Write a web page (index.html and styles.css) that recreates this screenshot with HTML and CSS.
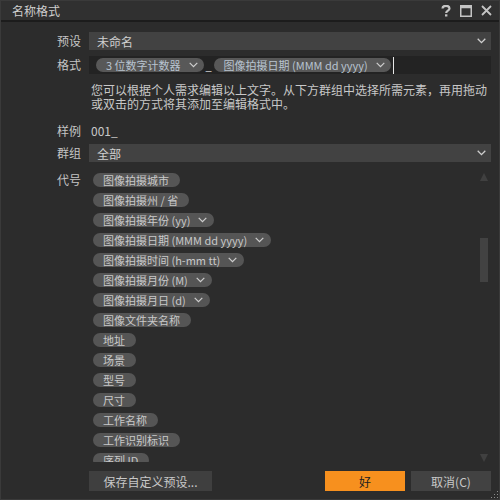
FILE: index.html
```html
<!DOCTYPE html>
<html lang="zh-CN">
<head>
<meta charset="utf-8">
<title>名称格式</title>
<link rel="stylesheet" href="styles.css">
</head>
<body>
<div class="window">
  <div class="titlebar">
    <span class="title">名称格式</span>
    <div class="win-icons">
      <svg class="wi" width="10" height="12" viewBox="0 0 10 12"><path d="M1.5 3.5 C1.5 1.2 3.2 0.8 5 0.8 C7 0.8 8.5 1.8 8.5 3.6 C8.5 5.6 5.2 5.8 5.2 8" fill="none" stroke="#c4c4c4" stroke-width="2.2"/><rect x="4" y="9.3" width="2.4" height="2.2" fill="#c4c4c4"/></svg>
      <svg class="wi" width="12" height="12" viewBox="0 0 12 12"><rect x="0.75" y="0.75" width="10.5" height="10.5" fill="none" stroke="#c4c4c4" stroke-width="1.5"/><rect x="0.75" y="0.75" width="10.5" height="2.5" fill="#c4c4c4"/></svg>
      <svg class="wi" width="11" height="11" viewBox="0 0 11 11"><path d="M1 1 L10 10 M10 1 L1 10" stroke="#c4c4c4" stroke-width="1.8"/></svg>
    </div>
  </div>
  <div class="content">
    <div class="row r-preset">
      <label class="lbl">预设</label>
      <div class="select">
        <span>未命名</span>
        <svg class="chev" width="9" height="6" viewBox="0 0 9 6"><path d="M0.7 0.8 L4.5 4.6 L8.3 0.8" fill="none" stroke="#cfcfcf" stroke-width="1.3"/></svg>
      </div>
    </div>
    <div class="row r-format">
      <label class="lbl">格式</label>
      <div class="format-box">
        <span class="token">3 位数字计数器<svg class="tchev" width="9" height="6" viewBox="0 0 9 6"><path d="M0.7 0.8 L4.5 4.6 L8.3 0.8" fill="none" stroke="#cfcfcf" stroke-width="1.2"/></svg></span>
        <span class="sep">_</span>
        <span class="token">图像拍摄日期 (MMM dd yyyy)<svg class="tchev" width="9" height="6" viewBox="0 0 9 6"><path d="M0.7 0.8 L4.5 4.6 L8.3 0.8" fill="none" stroke="#cfcfcf" stroke-width="1.2"/></svg></span>
        <span class="caret"></span>
      </div>
    </div>
    <div class="row r-help">
      <span class="lbl"></span>
      <p class="help">您可以根据个人需求编辑以上文字。从下方群组中选择所需元素，再用拖动或双击的方式将其添加至编辑格式中。</p>
    </div>
    <div class="row r-sample">
      <label class="lbl">样例</label>
      <span class="sample">001_</span>
    </div>
    <div class="row r-group">
      <label class="lbl">群组</label>
      <div class="select">
        <span>全部</span>
        <svg class="chev" width="9" height="6" viewBox="0 0 9 6"><path d="M0.7 0.8 L4.5 4.6 L8.3 0.8" fill="none" stroke="#cfcfcf" stroke-width="1.3"/></svg>
      </div>
    </div>
    <div class="row r-tokens">
      <label class="lbl">代号</label>
      <div class="token-area">
        <div class="token-list">
          <span class="pill">图像拍摄城市</span>
          <span class="pill">图像拍摄州 / 省</span>
          <span class="pill">图像拍摄年份 (yy)<svg class="tchev" width="9" height="6" viewBox="0 0 9 6"><path d="M0.7 0.8 L4.5 4.6 L8.3 0.8" fill="none" stroke="#cfcfcf" stroke-width="1.2"/></svg></span>
          <span class="pill">图像拍摄日期 (MMM dd yyyy)<svg class="tchev" width="9" height="6" viewBox="0 0 9 6"><path d="M0.7 0.8 L4.5 4.6 L8.3 0.8" fill="none" stroke="#cfcfcf" stroke-width="1.2"/></svg></span>
          <span class="pill">图像拍摄时间 (h-mm tt)<svg class="tchev" width="9" height="6" viewBox="0 0 9 6"><path d="M0.7 0.8 L4.5 4.6 L8.3 0.8" fill="none" stroke="#cfcfcf" stroke-width="1.2"/></svg></span>
          <span class="pill">图像拍摄月份 (M)<svg class="tchev" width="9" height="6" viewBox="0 0 9 6"><path d="M0.7 0.8 L4.5 4.6 L8.3 0.8" fill="none" stroke="#cfcfcf" stroke-width="1.2"/></svg></span>
          <span class="pill">图像拍摄月日 (d)<svg class="tchev" width="9" height="6" viewBox="0 0 9 6"><path d="M0.7 0.8 L4.5 4.6 L8.3 0.8" fill="none" stroke="#cfcfcf" stroke-width="1.2"/></svg></span>
          <span class="pill">图像文件夹名称</span>
          <span class="pill">地址</span>
          <span class="pill">场景</span>
          <span class="pill">型号</span>
          <span class="pill">尺寸</span>
          <span class="pill">工作名称</span>
          <span class="pill">工作识别标识</span>
          <span class="pill">序列 ID</span>
        </div>
        <div class="scrollbar">
          <span class="arrow up"></span>
          <span class="thumb"></span>
          <span class="arrow down"></span>
        </div>
      </div>
    </div>
    <div class="buttons">
      <button class="btn save">保存自定义预设...</button>
      <span class="spacer"></span>
      <button class="btn ok">好</button>
      <button class="btn cancel">取消(C)</button>
    </div>
  </div>
  <svg class="grip" width="8" height="8" viewBox="0 0 8 8"><rect x="6" y="0" width="1" height="1" fill="#8a8a8a"/><rect x="3" y="3" width="1" height="1" fill="#8a8a8a"/><rect x="6" y="3" width="1" height="1" fill="#8a8a8a"/><rect x="0" y="6" width="1" height="1" fill="#8a8a8a"/><rect x="3" y="6" width="1" height="1" fill="#8a8a8a"/><rect x="6" y="6" width="1" height="1" fill="#8a8a8a"/></svg>
</div>
</body>
</html>
```

FILE: styles.css
```css
* { box-sizing: border-box; }
html, body {
  margin: 0;
  padding: 0;
  background: #2c2c2c;
}
body {
  font-family: "Noto Sans CJK SC", "Noto Sans", sans-serif;
  font-size: 12px;
  color: #c8c8c8;
}
.window {
  position: relative;
  width: 500px;
  height: 500px;
  background: #2c2c2c;
  border: 1px solid #3a3a3a;
  display: flex;
  flex-direction: column;
}
.titlebar {
  height: 21px;
  flex: none;
  background: #303030;
  border-bottom: 2px solid #1c1c1c;
  display: flex;
  align-items: center;
  padding: 0 7px 0 11px;
}
.title {
  font-size: 12px;
  color: #cfcfcf;
  line-height: 19px;
  flex: 1;
}
.win-icons {
  display: flex;
  align-items: center;
  gap: 9px;
}
.wi { display: block; }
.content {
  flex: 1;
  display: flex;
  flex-direction: column;
  padding: 10px 8px 8px 0;
}
.row {
  display: flex;
  align-items: center;
}
.lbl {
  width: 80px;
  flex: none;
  text-align: right;
  margin-right: 8px;
  color: #c4c4c4;
  line-height: 14px;
}
.select {
  flex: 1;
  height: 18px;
  background: #424242;
  display: flex;
  align-items: center;
  justify-content: space-between;
  padding: 0 5px 0 8px;
  color: #d0d0d0;
}
.chev { display: block; }
.r-format { margin-top: 6px; }
.format-box {
  flex: 1;
  height: 18px;
  background: #232323;
  display: flex;
  align-items: center;
  padding-left: 7px;
}
.token {
  display: inline-flex;
  align-items: center;
  height: 14px;
  border-radius: 7px;
  background: #585858;
  padding: 0 6px 0 10px;
  font-size: 11px;
  color: #b8c4d0;
  white-space: nowrap;
}
.tchev { margin-left: 8px; display: block; }
.sep {
  width: 10px;
  text-align: center;
  color: #e0e0e0;
  font-size: 11px;
  line-height: 14px;
  align-self: flex-end;
  margin-bottom: 2px;
}
.caret {
  width: 1px;
  height: 17px;
  background: #e6e6e6;
  margin-left: 2px;
}
.r-help { margin-top: 9px; align-items: flex-start; }
.help {
  margin: 0;
  flex: 1;
  line-height: 14px;
  padding-left: 2px;
  padding-right: 4px;
  color: #c8c8c8;
}
.r-sample { margin-top: 13px; }
.sample { padding-left: 2px; line-height: 14px; color: #c8c8c8; }
.r-group { margin-top: 6px; }
.r-tokens {
  margin-top: 8px;
  align-items: flex-start;
}
.r-tokens .lbl { margin-top: 3px; }
.token-area {
  flex: 1;
  height: 292px;
  display: flex;
  overflow: hidden;
}
.token-list {
  flex: 1;
  display: flex;
  flex-direction: column;
  align-items: flex-start;
  gap: 6px;
  padding: 3px 0 0 4px;
  overflow: hidden;
}
.pill {
  display: inline-flex;
  align-items: center;
  height: 14px;
  flex: none;
  border-radius: 7px;
  background: #555555;
  padding: 0 11px 0 10px;
  font-size: 11px;
  color: #c9c9c9;
  white-space: nowrap;
}
.pill .tchev { margin-left: 8px; margin-right: -4px; }
.scrollbar {
  width: 8px;
  flex: none;
  margin-right: 3px;
  display: flex;
  flex-direction: column;
  align-items: center;
}
.arrow {
  width: 0;
  height: 0;
  border-left: 4px solid transparent;
  border-right: 4px solid transparent;
}
.arrow.up {
  margin-top: 3px;
  border-bottom: 8px solid #404040;
}
.arrow.down {
  margin-top: auto;
  border-top: 8px solid #404040;
}
.thumb {
  width: 8px;
  height: 44px;
  background: #424242;
  margin-top: 57px;
}
.buttons {
  margin-top: auto;
  display: flex;
  padding-left: 88px;
}
.btn {
  height: 20px;
  border: none;
  font-family: inherit;
  font-size: 12px;
  padding: 0;
  cursor: default;
}
.save {
  width: 123px;
  background: #3f3f3f;
  color: #c8c8c8;
}
.spacer { flex: 1; }
.ok {
  width: 80px;
  background: #f7901e;
  color: #202020;
}
.cancel {
  width: 80px;
  margin-left: 6px;
  background: #424242;
  color: #c8c8c8;
}
.grip {
  position: absolute;
  right: 0;
  bottom: 0;
}
```
